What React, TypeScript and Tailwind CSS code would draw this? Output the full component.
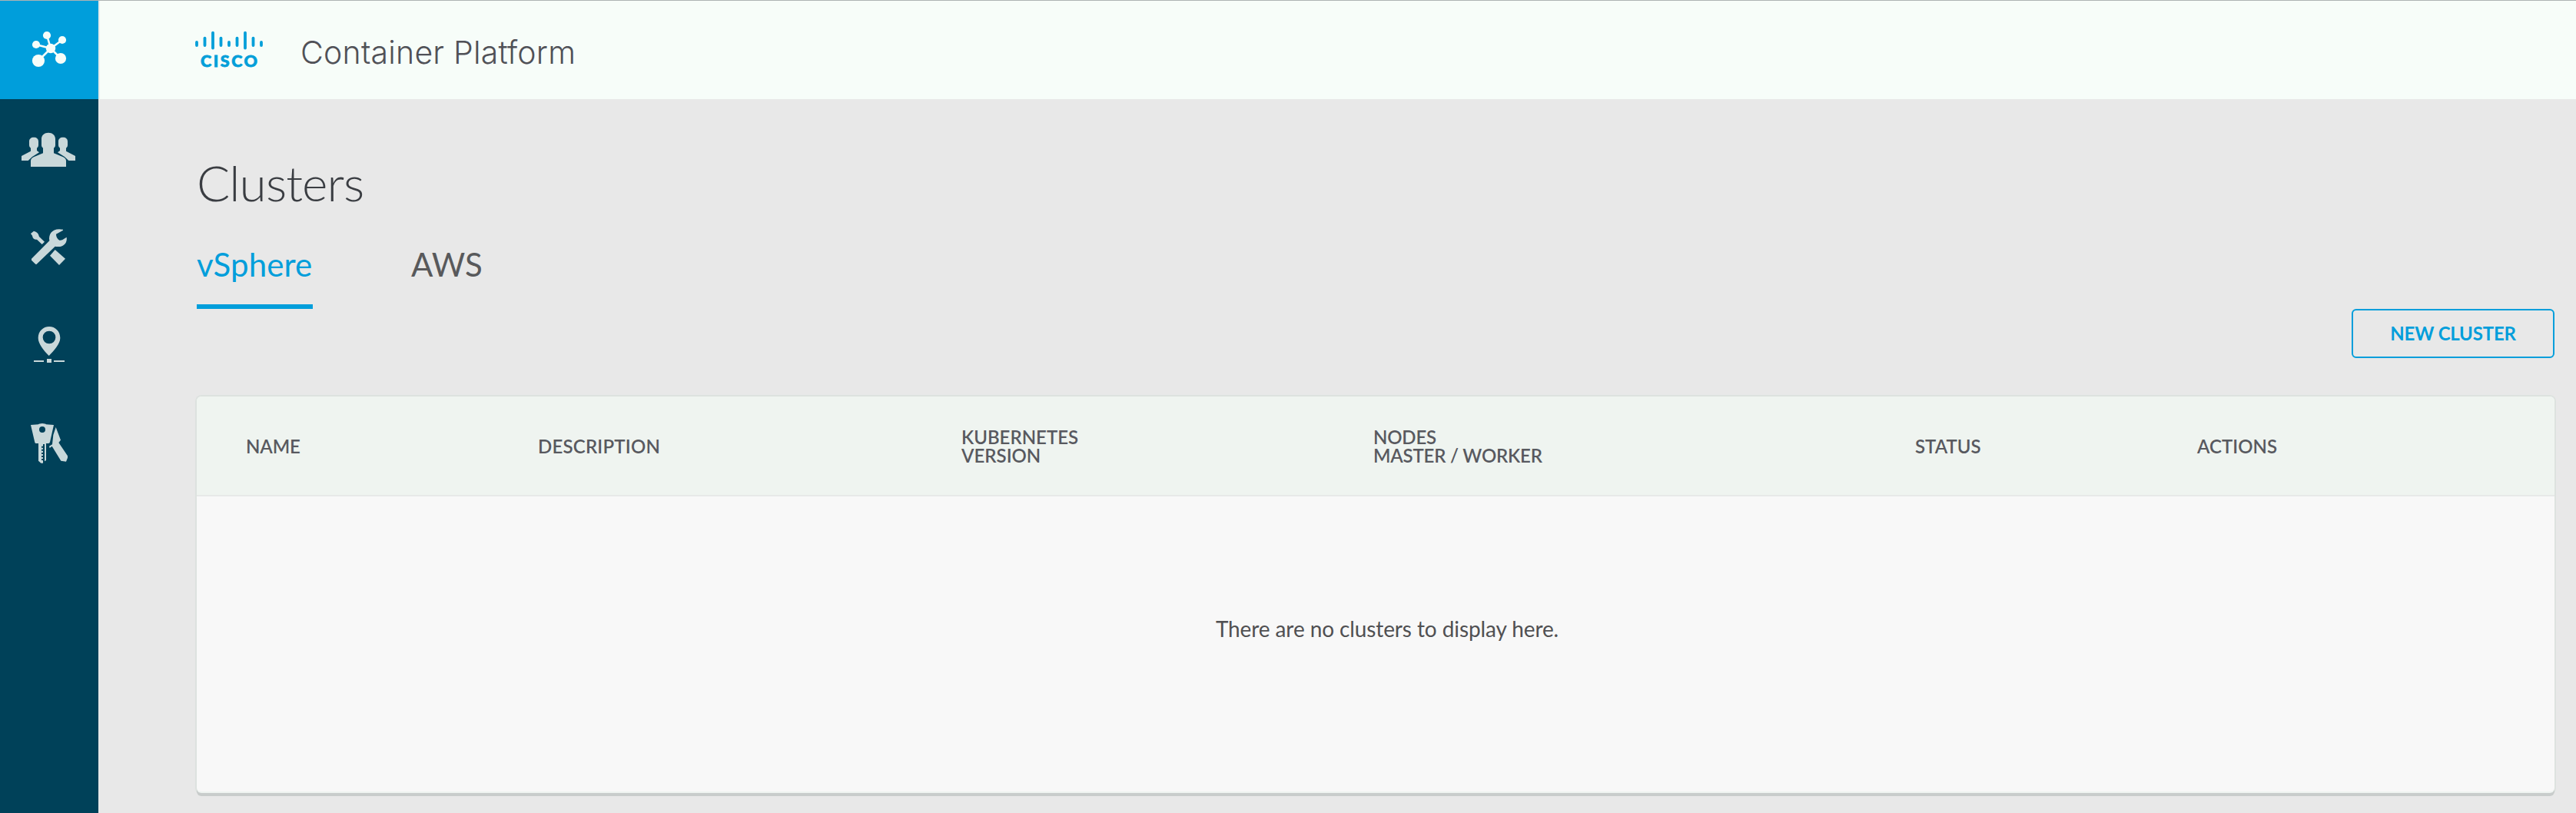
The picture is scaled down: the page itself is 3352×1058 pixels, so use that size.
import React from "react";

const ICON = "#c9d8da";

function ClusterIcon() {
  return (
    <svg viewBox="0 1 128 128" className="size-32" fill="#f7fdf9" stroke="#f7fdf9">
      <path d="M66 63 61 46M66 63 81 52M66 63 47 58M66 63 50 79M66 63 79 76" strokeWidth="2.6" fill="none" />
      <g stroke="none">
        <circle cx="66" cy="63" r="6.2" />
        <circle cx="61" cy="46" r="5.1" />
        <circle cx="81" cy="52" r="5.1" />
        <circle cx="47" cy="58" r="5.1" />
        <circle cx="50" cy="79" r="8.1" />
        <circle cx="79" cy="76" r="7.1" />
      </g>
    </svg>
  );
}

function UsersIcon() {
  return (
    <svg viewBox="0 129 128 128" className="size-32" fill={ICON}>
      <g transform="translate(0 140) scale(.33333)">
        <path d="M189 98C204 98 216 107 216 122V148Q216 156 210 158V178L246 193Q258 199 258 208V231H120V208Q120 199 132 193L168 178V158Q162 156 162 148V122C162 107 174 98 189 98Z" />
        <path d="M132 116C143 116 150 122 150 132V147Q150 156 144 158V168L153 175L126 192L110 207H84V189L120 170V158Q114 156 114 147V132C114 122 121 116 132 116Z" />
        <path d="M246 116C235 116 228 122 228 132V147Q228 156 234 158V168L225 175L252 192L268 207H294V189L258 170V158Q264 156 264 147V132C264 122 257 116 246 116Z" />
      </g>
    </svg>
  );
}

function ToolsIcon() {
  return (
    <svg viewBox="0 257 128 128" className="size-32" fill={ICON}>
      <g transform="translate(0 140) scale(.33333)">
        <path d="M120 492 132 482Q150 486 153 504L174 524 164 534 144 515Q128 516 126 500Z" />
        <path d="M215 555 255 590 231 615 195 578Z" />
        <path d="M123 590 193 520C188 492 206 468 246 476V479L219 494Q219 510 232 518Q236 519 243 517L260 506C264 530 246 548 215 542L143 611Q140 613 137 610L123 596Z" />
      </g>
    </svg>
  );
}

function PinIcon() {
  return (
    <svg viewBox="0 385 128 128" className="size-32" fill={ICON}>
      <g transform="translate(0 390) scale(.33333)">
        <path
          fillRule="evenodd"
          d="M192 105C216 105 235 124 235 149C235 172 212 197 191 219C170 197 149 172 149 149C149 124 168 105 192 105ZM192 122A25 25 0 1 0 192 172A25 25 0 1 0 192 122Z"
        />
        <path d="M132 237H171V243H132ZM183 231H201V246H183ZM210 237H252V243H210Z" />
      </g>
    </svg>
  );
}

function KeysIcon() {
  return (
    <svg viewBox="0 513 128 128" className="size-32" fill={ICON}>
      <g transform="translate(0 390) scale(.33333)">
        <path
          fillRule="evenodd"
          d="M120 489 150 487Q152 484 165 483Q178 484 180 487L210 489 195 556Q194 561 189 561H180V627L174 631V564H168V572H162V578H168V584H162V590H168V597H162V603H168V609H162V615H168V621H162V627H168V638H160L150 629V561H141Q137 561 136 557ZM165 495A12 12 0 1 0 165 519A12 12 0 1 0 165 495Z"
        />
        <path d="M218 498 237 548 229 558 264 610V617L258 632 238 629 203 572 194 579 192 572 204 565 208 528Z" />
      </g>
    </svg>
  );
}

const bars: [number, number, number][] = [
  [256, 52.5, 60.5],
  [266.5, 47.2, 60.5],
  [277, 40.2, 64],
  [287.5, 47.2, 60.5],
  [298, 52.5, 60.5],
  [308.5, 47.2, 60.5],
  [319, 40.2, 64],
  [329.5, 47.2, 60.5],
  [340, 52.5, 60.5],
];

function CiscoLogo() {
  return (
    <svg viewBox="252 36 92 56" className="h-14 w-[92px] shrink-0" fill="#049fd9">
      {bars.map(([x, top, bottom]) => (
        <rect key={x} x={x - 1.9} y={top - 0.5} width="3.8" height={bottom - top} rx="1.9" />
      ))}
      <text
        x="261"
        y="85.5"
        textLength="74"
        lengthAdjust="spacing"
        fontFamily="Lato, sans-serif"
        fontWeight="900"
        fontSize="21.5"
        stroke="#049fd9"
        strokeWidth="0.8"
      >
        CISCO
      </text>
    </svg>
  );
}

const navIcons = [UsersIcon, ToolsIcon, PinIcon, KeysIcon];

export default function App() {
  return (
    <div className="flex h-[1058px] w-[3352px] flex-col overflow-hidden border-t border-[#adb3b3] bg-[#e8e8e8] font-['Lato',sans-serif] text-[#58595b]">
      <div className="flex min-h-0 flex-1">
        <nav className="flex w-32 shrink-0 flex-col bg-[#004159]">
          <a className="block size-32 bg-[#009edb]">
            <ClusterIcon />
          </a>
          {navIcons.map((Icon, i) => (
            <a key={i} className="block size-32">
              <Icon />
            </a>
          ))}
        </nav>

        <div className="flex min-w-0 flex-1 flex-col">
          <header className="flex h-32 shrink-0 items-center border-l-2 border-[#e8ece9] bg-[#f7fdf9] pl-[122px]">
            <CiscoLogo />
            <span className="ml-[47px] pt-[6px] font-['Inter',sans-serif] text-[41px] leading-10 font-light tracking-[0.2px] text-[#505157]">
              Container Platform
            </span>
          </header>

          <main className="flex flex-1 flex-col pt-[77px] pr-7 pl-32">
            <h1 className="text-[64px] leading-[64px] font-light tracking-[-0.9px] text-[#3a3d42]">Clusters</h1>

            <div className="mt-[50px] flex gap-32 text-[42px] leading-[48px]">
              <button className="w-[151px] border-b-[6px] border-[#009edb] pb-7 text-left tracking-[0.1px] text-[#009edb]">
                vSphere
              </button>
              <button className="border-b-[6px] border-transparent pb-7">AWS</button>
            </div>

            <button className="h-16 w-[264px] self-end rounded-md border-2 border-[#009edb] text-2xl leading-6 font-bold tracking-[-0.2px] text-[#009edb]">
              NEW CLUSTER
            </button>

            <section className="mt-[50px] flex h-[516px] flex-col overflow-hidden rounded-md border-b-2 border-[#eef3f0] bg-[#f8f8f8] shadow-[0_4px_0_0_#c8cccb,0_0_0_2px_#dde2df]">
              <div className="grid h-[130px] shrink-0 grid-cols-[380px_551px_536px_705px_367px_1fr] items-center border-b-2 border-[#e7e9e8] bg-[#eff4f0] pt-[2px] pl-16 text-2xl leading-6 font-semibold text-[#58595f]">
                <div className="tracking-[-0.1px]">NAME</div>
                <div className="tracking-[0.2px]">DESCRIPTION</div>
                <div>
                  <div>KUBERNETES</div>
                  <div>VERSION</div>
                </div>
                <div className="tracking-[-0.2px]">
                  <div>NODES</div>
                  <div>MASTER / WORKER</div>
                </div>
                <div>STATUS</div>
                <div>ACTIONS</div>
              </div>
              <p className="pt-[158px] pl-[30px] text-center text-[28px] leading-7 tracking-[-0.1px] text-[#505052]">
                There are no clusters to display here.
              </p>
            </section>
          </main>
        </div>
      </div>
    </div>
  );
}
